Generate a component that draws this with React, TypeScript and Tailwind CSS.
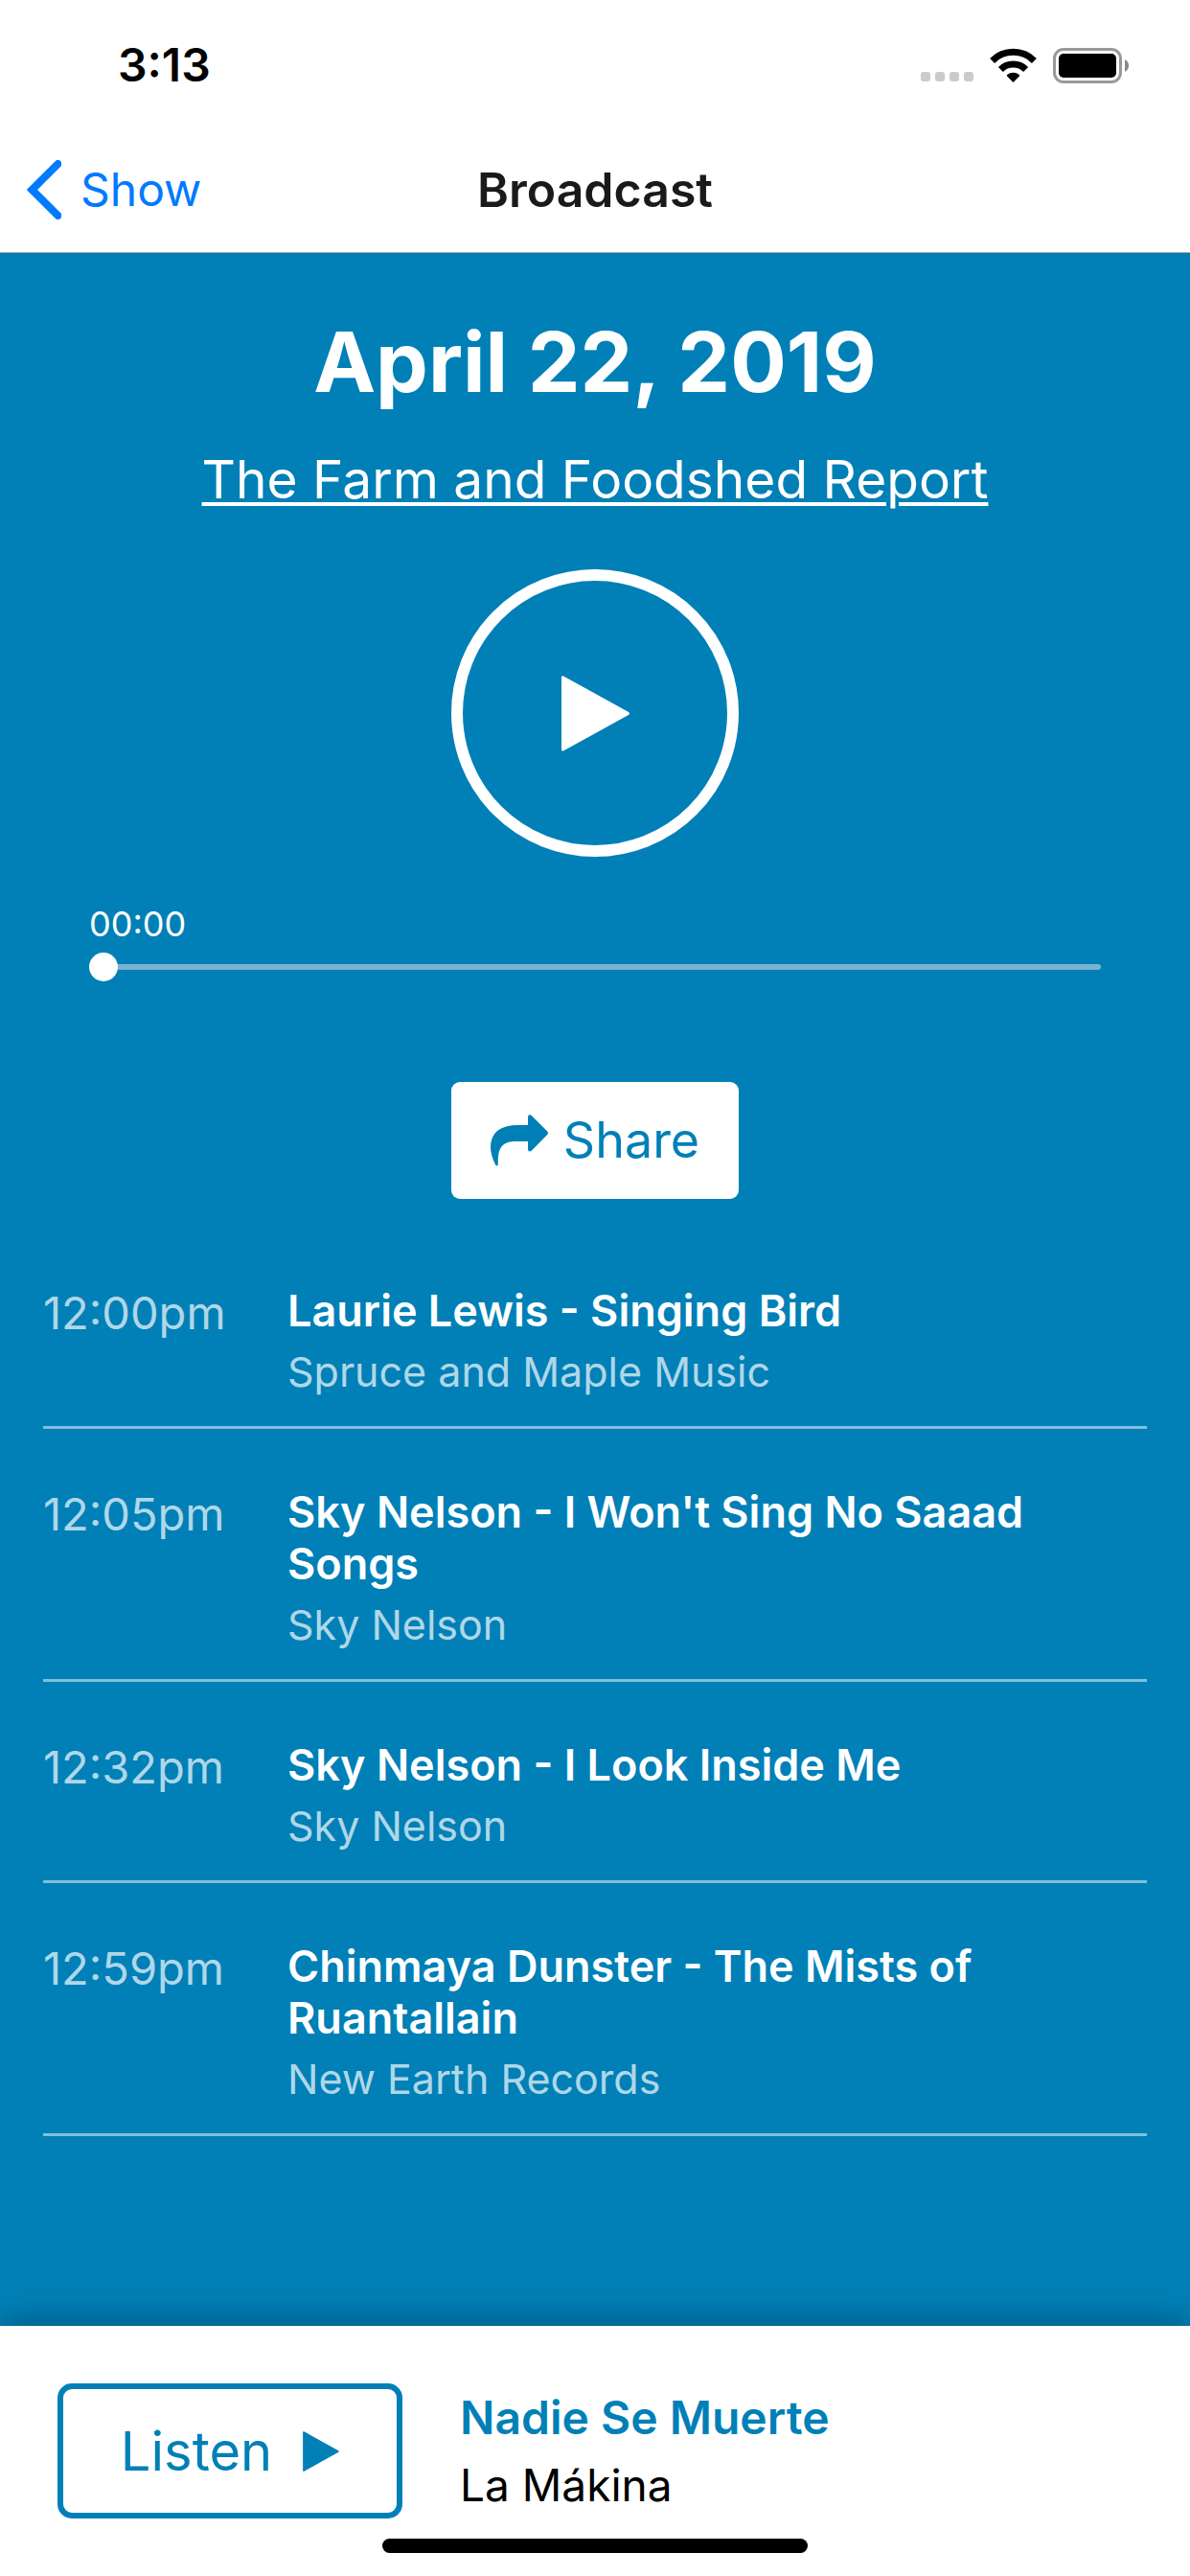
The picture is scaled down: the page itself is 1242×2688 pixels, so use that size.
import React, { useState } from 'react';

interface Track {
  time: string;
  title: string;
  label: string;
}

const tracks: Track[] = [
  { time: '12:00pm', title: 'Laurie Lewis - Singing Bird', label: 'Spruce and Maple Music' },
  { time: '12:05pm', title: "Sky Nelson - I Won't Sing No Saaad Songs", label: 'Sky Nelson' },
  { time: '12:32pm', title: 'Sky Nelson - I Look Inside Me', label: 'Sky Nelson' },
  { time: '12:59pm', title: 'Chinmaya Dunster - The Mists of Ruantallain', label: 'New Earth Records' },
];

const StatusBar: React.FC = () => (
  <div className="flex h-[132px] items-center justify-between pt-1 pr-16 pl-[123px]">
    <span className="text-[48px] leading-[56px] font-semibold text-black">3:13</span>
    <div className="flex items-center">
      <svg className="mt-6 h-[10px] w-[55px]" viewBox="0 0 55 10" fill="#cbcbcb" aria-hidden="true">
        <rect x="0" width="10" height="10" rx="3" />
        <rect x="15" width="10" height="10" rx="3" />
        <rect x="30" width="10" height="10" rx="3" />
        <rect x="45" width="10" height="10" rx="3" />
      </svg>
      <svg className="ml-[17px] h-9 w-[49px]" viewBox="0 0 49 36" aria-hidden="true">
        <g fill="none" stroke="#000" strokeWidth="7">
          <path d="M2.6 13.4a31 31 0 0 1 43.8 0" />
          <path d="M11.4 22.4a18.6 18.6 0 0 1 26.2 0" />
        </g>
        <path d="M24.5 36l-6.4-6.5q-.9-.9.1-1.6a10.5 10.5 0 0 1 12.6 0q1 .7.1 1.6z" />
      </svg>
      <svg className="ml-[17px] h-[37px] w-[79px]" viewBox="0 0 79 37" aria-hidden="true">
        <rect x="1.5" y="1.5" width="69" height="34" rx="9.5" fill="none" stroke="#999" strokeWidth="3" />
        <rect x="6" y="6" width="60" height="25" rx="5" />
        <path d="M75 12q4 2.4 4 6.5t-4 6.5z" fill="#888" />
      </svg>
    </div>
  </div>
);

const NavBar: React.FC = () => (
  <nav className="grid h-[132px] grid-cols-[1fr_auto_1fr] items-center border-b border-[#a7a7aa] px-7">
    <a href="#show" className="flex items-center gap-5 text-[#007aff]">
      <svg className="h-[62px] w-9" viewBox="0 0 36 62" aria-hidden="true">
        <path d="M32.5 4L5.5 31l27 27" fill="none" stroke="currentColor" strokeWidth="8" strokeLinecap="round" strokeLinejoin="miter" />
      </svg>
      <span className="text-[48px] leading-[60px]">Show</span>
    </a>
    <h1 className="text-[50px] leading-[60px] font-semibold text-[#1a1a1a]">Broadcast</h1>
  </nav>
);

const PlayTriangle: React.FC<{ className: string }> = ({ className }) => (
  <svg className={className} viewBox="0 0 71 79" fill="currentColor" aria-hidden="true">
    <path d="M0 2Q0-.6 2.5.7L70 38q2 1.5 0 3L2.5 78.3Q0 79.6 0 77z" />
  </svg>
);

const Player: React.FC = () => {
  const [position, setPosition] = useState(0);

  return (
    <section className="flex flex-col items-center">
      <h2 className="text-[87px] leading-[108px] font-bold">April 22, 2019</h2>
      <a href="#farm-and-foodshed" className="mt-8 text-[55px] leading-[72px] underline decoration-4 underline-offset-4">
        The Farm and Foodshed Report
      </a>
      <button
        type="button"
        aria-label="Play broadcast"
        className="mt-[58px] flex size-[300px] items-center justify-center rounded-full border-[12px] border-white"
      >
        <PlayTriangle className="h-[79px] w-[71px]" />
      </button>
      <div className="mt-[46px] w-full px-12">
        <label htmlFor="position" className="block text-[36px] leading-[48px]">00:00</label>
        <input
          id="position"
          type="range"
          min={0}
          max={3600}
          value={position}
          onChange={(e) => setPosition(Number(e.target.value))}
          className="mt-1.5 block h-[30px] w-full appearance-none bg-transparent [&::-webkit-slider-runnable-track]:h-[6px] [&::-webkit-slider-runnable-track]:rounded-full [&::-webkit-slider-runnable-track]:bg-[#7ab3d2] [&::-webkit-slider-thumb]:-mt-3 [&::-webkit-slider-thumb]:size-[30px] [&::-webkit-slider-thumb]:appearance-none [&::-webkit-slider-thumb]:rounded-full [&::-webkit-slider-thumb]:bg-white"
        />
      </div>
      <button
        type="button"
        className="mt-[105px] flex h-[122px] w-[300px] items-center justify-center gap-4 rounded-[9px] bg-white text-[#0080b7]"
      >
        <svg className="h-[54px] w-[60px]" viewBox="0 0 60 54" fill="currentColor" aria-hidden="true">
          <path d="M39 11V2.5Q39 .3 41 .3q.9 0 1.7.8L59.2 17.5q1.5 1.7 0 3.4L42.7 37.7q-.8.8-1.7.8-2 0-2-2.2V28H27C13 28 7.5 33 7.8 51.5Q7.8 53.5 6.5 53.5 5.5 53.5 5 52.3 0 42 0 34 .3 11 29 11z" />
        </svg>
        <span className="text-[52px] leading-[64px]">Share</span>
      </button>
    </section>
  );
};

const TrackRow: React.FC<Track> = ({ time, title, label }) => (
  <li className="flex border-b-[3px] border-white/50 pt-[60px] pb-[30px]">
    <time className="w-[255px] shrink-0 text-[47px] leading-[58px] text-white/70">{time}</time>
    <div className="pr-[45px]">
      <h3 className="text-[45px] leading-[54px] font-semibold">{title}</h3>
      <p className="mt-[9px] text-[43px] leading-[54px] text-white/70">{label}</p>
    </div>
  </li>
);

const NowPlaying: React.FC = () => (
  <footer className="relative flex items-center gap-[60px] bg-white px-[60px] py-[60px] shadow-[0_-6px_30px_rgba(0,0,0,0.3)]">
    <button
      type="button"
      className="flex h-[141px] w-[360px] shrink-0 items-center justify-center gap-8 rounded-[15px] border-[6px] border-[#0080b7] text-[#0080b7]"
    >
      <span className="text-[56px] leading-[72px]">Listen</span>
      <PlayTriangle className="h-[42px] w-[38px]" />
    </button>
    <div>
      <p className="text-[48px] leading-[70px] font-semibold text-[#0080b7]">Nadie Se Muerte</p>
      <p className="text-[46px] leading-[70px] text-black">La Mákina</p>
    </div>
    {/* Home indicator */}
    <div className="absolute bottom-6 left-1/2 h-[15px] w-[444px] -translate-x-1/2 rounded-full bg-black" />
  </footer>
);

export default function App() {
  return (
    <div className="flex min-h-screen flex-col bg-white font-['Inter','Liberation_Sans',sans-serif]">
      <header>
        <StatusBar />
        <NavBar />
      </header>
      <main className="flex-1 bg-[#0080b7] px-[45px] pt-[60px] text-white">
        <Player />
        <ul className="mt-[30px]">
          {tracks.map((track) => (
            <TrackRow key={track.time} {...track} />
          ))}
        </ul>
      </main>
      <NowPlaying />
    </div>
  );
}
